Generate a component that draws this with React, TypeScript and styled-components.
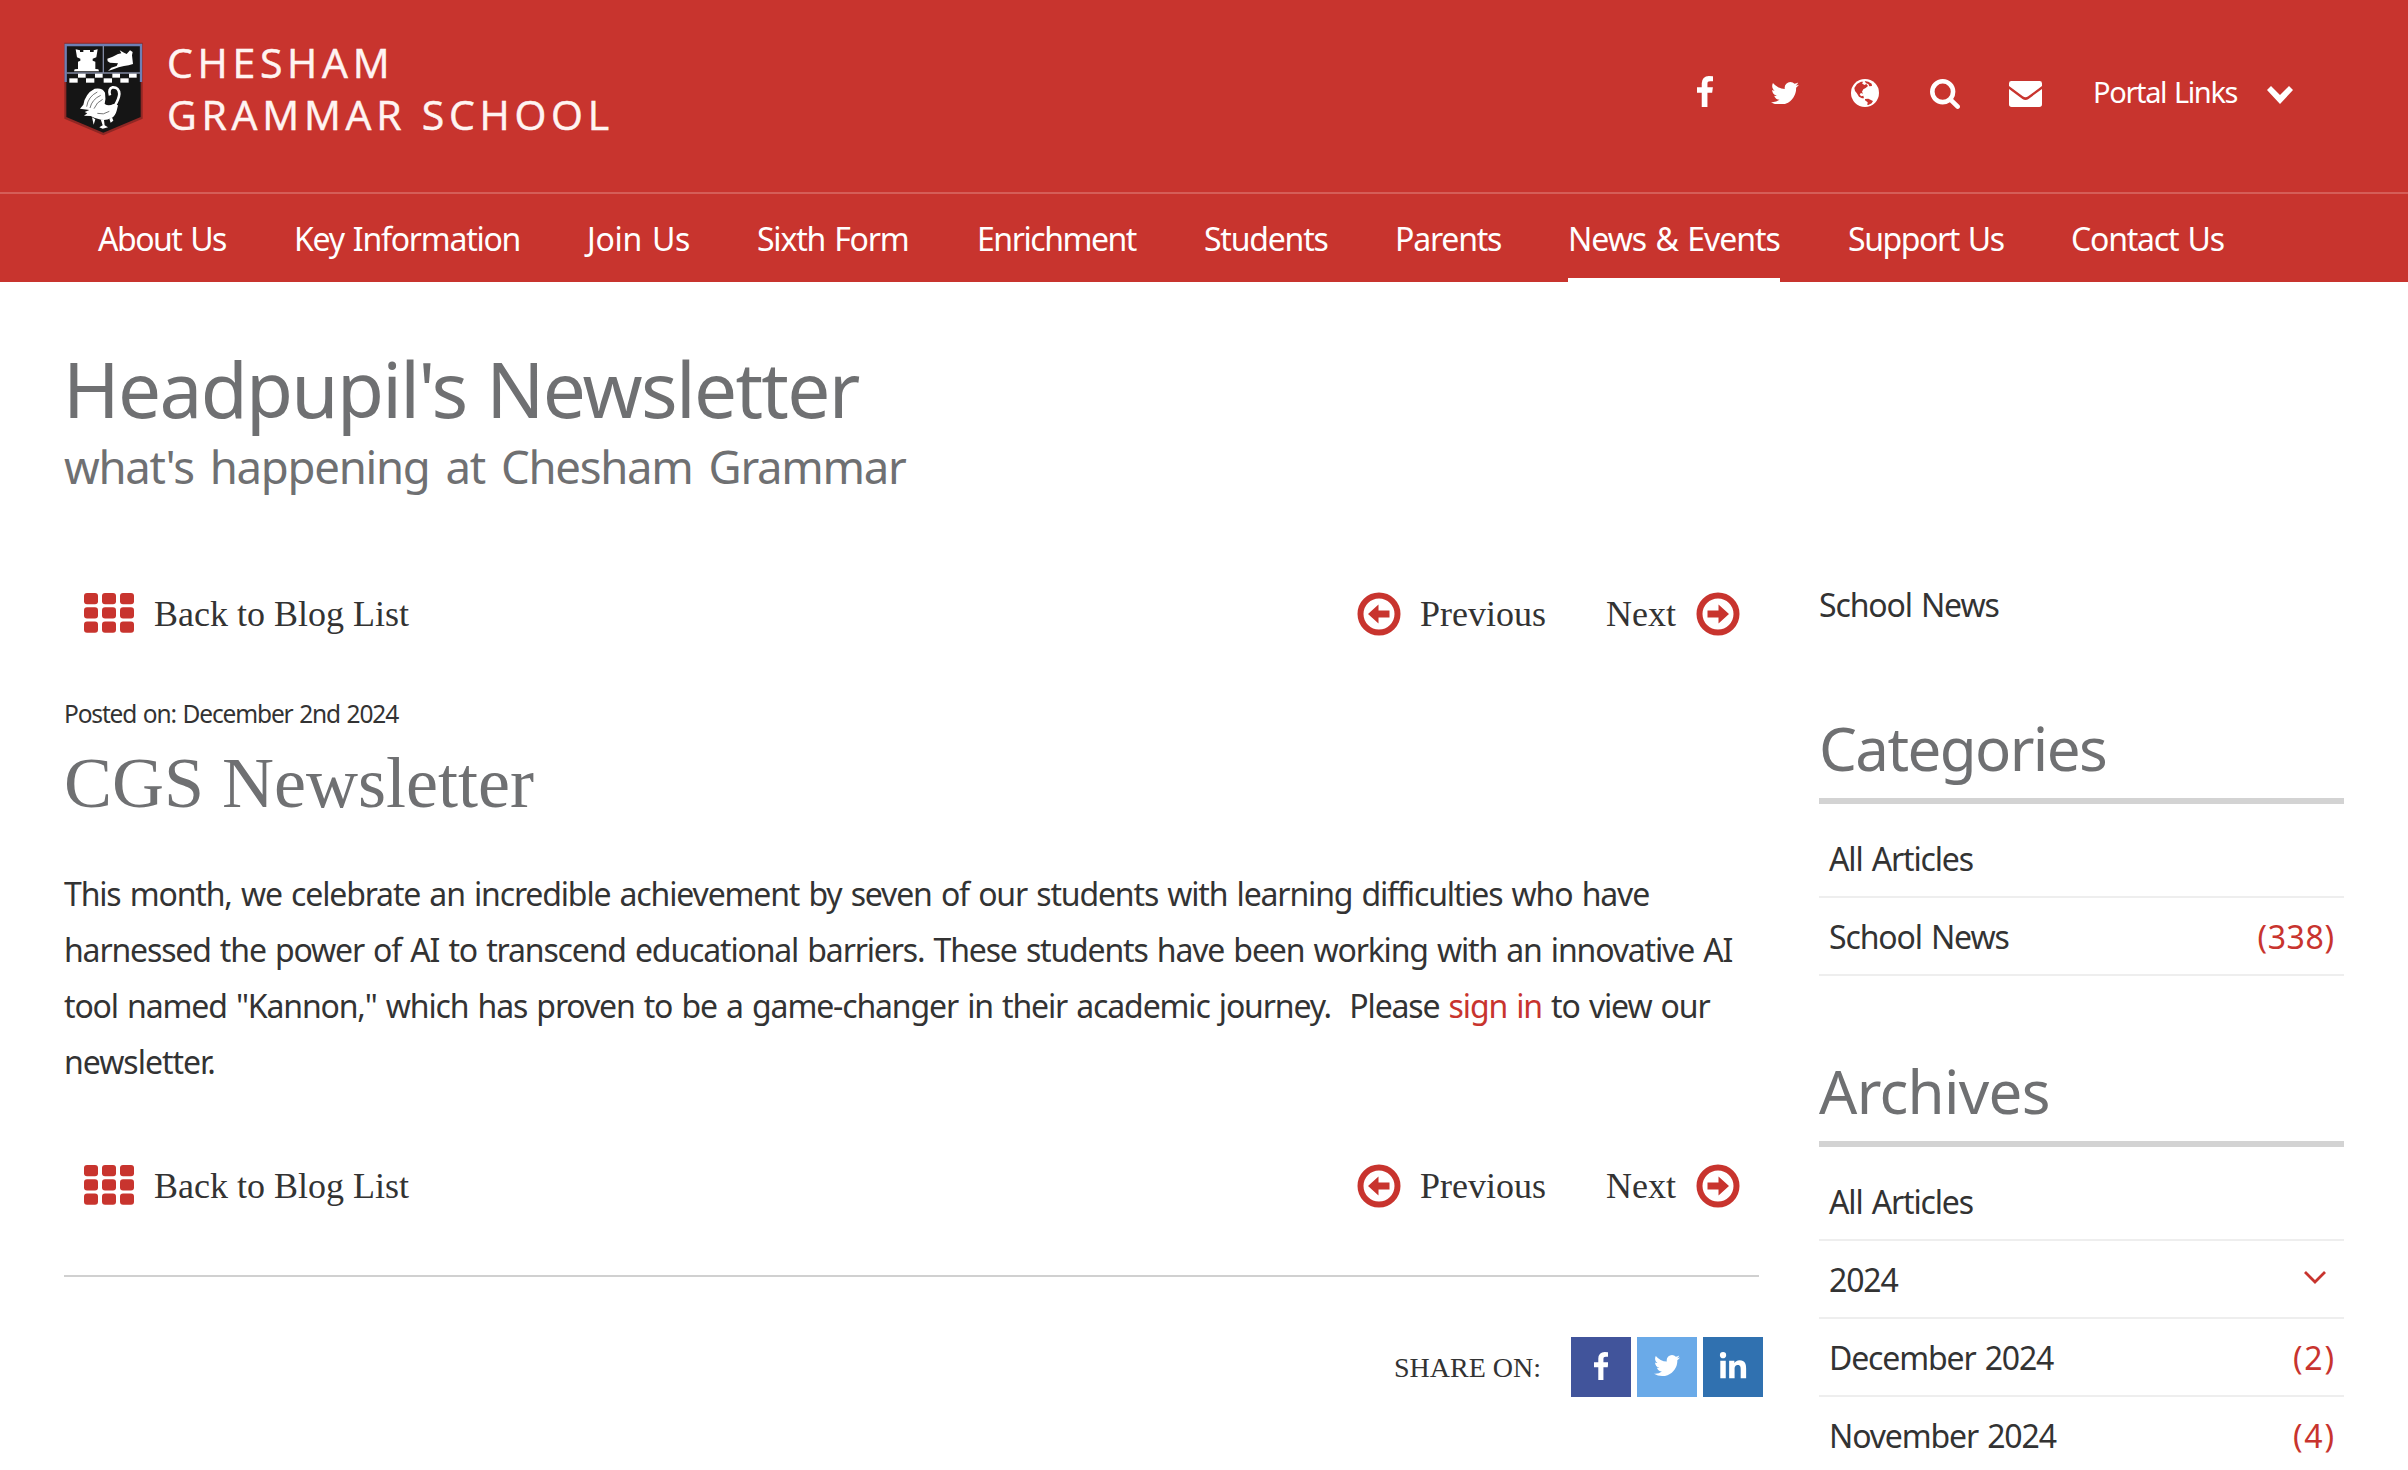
import React from "react";
import styled, { createGlobalStyle } from "styled-components";
import { FaLinkedinIn } from "react-icons/fa";

const RED = "#c8342e";
const GREY = "#6f7072";
const SANS = `"Noto Sans", "Open Sans", sans-serif`;
const SERIF = `"Liberation Serif", serif`;

const Global = createGlobalStyle`
  * { box-sizing: border-box; }
  html { overflow: hidden; }
  body { margin: 0; background: #fff; color: #333; font-family: ${SANS}; }
  h1, h2, p, ul { margin: 0; padding: 0; font-weight: 400; }
  ul { list-style: none; }
  a { color: inherit; text-decoration: none; }
  svg { display: block; flex: none; }
`;

const Page = styled.div`
  width: 2408px;
  height: 1470px;
  overflow: hidden;
`;

const Header = styled.header`
  height: 282px;
  background: ${RED};
  color: #fff;
`;

const TopBar = styled.div`
  display: flex;
  justify-content: space-between;
  align-items: flex-start;
  height: 194px;
  padding: 0 115px 0 64px;
  border-bottom: 2px solid #d55e58;
`;

const Logo = styled.a`
  display: flex;
  align-items: flex-start;
  gap: 24px;
  padding-top: 42px;
`;

const LogoText = styled.span`
  display: flex;
  flex-direction: column;
  margin-top: -6px;
  font-family: "Open Sans", sans-serif;
  color: #fff4f2;
  -webkit-text-stroke: 0.5px #fff4f2;
`;

const LogoLine = styled.span<{ $ls: number }>`
  font-size: 41px;
  line-height: 52px;
  letter-spacing: ${(p) => p.$ls}px;
  white-space: nowrap;
`;

const Tools = styled.div`
  display: flex;
  align-items: center;
  width: 628px;
  height: 186px;
`;

const Tool = styled.a<{ $drop?: number }>`
  display: flex;
  flex: none;
  align-items: center;
  justify-content: center;
  width: 80px;
  height: 40px;
  margin-top: ${(p) => (p.$drop ?? 0) * 2}px;
`;

const Portal = styled.a`
  display: flex;
  flex: 1;
  align-items: center;
  justify-content: space-between;
  margin-left: 28px;
  padding-bottom: 3px;
  font-size: 29px;
  letter-spacing: -1.35px;
  word-spacing: 1.5px;
  white-space: nowrap;
`;

const DropMark = styled.span`
  padding-top: 7px;
`;

const Nav = styled.nav`
  display: flex;
  gap: 68px;
  height: 88px;
  padding-left: 98px;
`;

const NavItem = styled.a<{ $w: number; $ls: number; $active?: boolean }>`
  width: ${(p) => p.$w}px;
  height: 88px;
  font-size: 32px;
  line-height: 90px;
  letter-spacing: ${(p) => p.$ls}px;
  word-spacing: 2px;
  white-space: nowrap;
  border-bottom: ${(p) => (p.$active ? "4px solid #fff" : "0")};
`;

const Heading = styled.div`
  height: 288px;
  padding: 61px 64px 0 63px;
  color: ${GREY};
`;

const Title = styled.h1`
  font-size: 76.5px;
  line-height: 90px;
  letter-spacing: -1.7px;
  word-spacing: 1.5px;
`;

const Subtitle = styled.p`
  padding-left: 1px;
  font-size: 45.5px;
  line-height: 66px;
  letter-spacing: -1.28px;
  word-spacing: 5.5px;
`;

const Columns = styled.div`
  display: grid;
  grid-template-columns: 1695px 525px;
  column-gap: 60px;
  padding-left: 64px;
`;

const Pager = styled.div`
  display: flex;
  align-items: center;
  height: 88px;
  padding: 0 19px 0 20px;
  font-family: ${SERIF};
  font-size: 36px;
`;

const PagerLink = styled.a<{ $gap?: number; $push?: boolean }>`
  display: flex;
  align-items: center;
  gap: ${(p) => p.$gap ?? 20}px;
  margin-left: ${(p) => (p.$push ? "auto" : "0")};
`;

const PagerNext = styled(PagerLink)`
  margin-left: 60px;
`;

const GridIcon = styled.svg`
  margin-bottom: 3px;
`;

const Posted = styled.p`
  margin-top: 36px;
  font-size: 24.5px;
  line-height: 40px;
  letter-spacing: -1.15px;
  word-spacing: 1.4px;
`;

const ArticleTitle = styled.h2`
  margin-top: 4px;
  font-family: ${SERIF};
  font-size: 72px;
  line-height: 90px;
  color: ${GREY};
`;

const Body = styled.p`
  margin: 37.5px 0 52.5px;
  font-size: 32px;
  line-height: 56px;
  word-spacing: 2px;
`;

const Line = styled.span<{ $ls: number }>`
  display: block;
  white-space: pre;
  letter-spacing: ${(p) => p.$ls}px;
`;

const SignIn = styled.a`
  color: ${RED};
`;

const Rule = styled.div`
  height: 2px;
  margin-top: 45px;
  background: #d0d0d0;
`;

const Share = styled.div`
  display: flex;
  align-items: center;
  justify-content: flex-end;
  gap: 6px;
  margin: 60px -4px 0 0;
`;

const ShareLabel = styled.span`
  margin-right: 24px;
  padding-top: 2px;
  font-family: ${SERIF};
  font-size: 28px;
`;

const ShareButton = styled.a<{ $bg: string; $lift?: number }>`
  display: flex;
  align-items: center;
  justify-content: center;
  width: 60px;
  height: 60px;
  padding-bottom: ${(p) => p.$lift ?? 2}px;
  background: ${(p) => p.$bg};
  color: #fff;
`;

const Crumb = styled.p`
  height: 128px;
  font-size: 32px;
  line-height: 70px;
  letter-spacing: -1.15px;
  word-spacing: 2px;
`;

const SideTitle = styled.h2<{ $ls: number }>`
  height: 106px;
  padding-top: 8px;
  font-size: 60px;
  line-height: 84px;
  letter-spacing: ${(p) => p.$ls}px;
  color: ${GREY};
  border-bottom: 6px solid #d3d3d3;
`;

const List = styled.ul`
  height: 237px;
  padding-top: 16px;
`;

const Item = styled.li`
  display: flex;
  align-items: center;
  justify-content: space-between;
  height: 78px;
  padding: 0 10px;
  font-size: 32px;
  letter-spacing: -1.15px;
  word-spacing: 2px;
  border-bottom: 2px solid #eee;
`;

const Count = styled.span<{ $ls: number }>`
  margin-right: ${(p) => -p.$ls}px;
  letter-spacing: ${(p) => p.$ls}px;
  color: ${RED};
`;

const Toggle = styled.span`
  margin-right: 8px;
  padding-bottom: 3px;
`;

const Crest = () => (
  <svg width="79" height="94" viewBox="42 36 237 282">
    <path d="M43 38H278V266L160 316L43 266Z" fill="#8f2724" />
    <path d="M49 44H272V261L160 308L49 261Z" fill="#151515" />
    <path d="M47 156V45H273V156" fill="none" stroke="#6d7fb4" strokeWidth="7" />
    <path d="M160 48V129M50 129H270" stroke="#8088a0" strokeWidth="4" />
    <g fill="#fff">
      {[84, 135, 187, 237].map((x) => <rect key={x} x={x} y="131" width="23" height="12" />)}
      {[58, 108, 161, 211].map((x) => <rect key={x} x={x} y="145" width="25" height="13" />)}
      <path d="M77 58L90 61V66H100V60H120V66H131V61L143 58L139 82L128 86V92L136 95V117L145 118L147 124H72L74 118L84 117V95L91 92V86L81 82Z" />
      <path d="M172 86L188 80L204 72L214 70L209 61L222 68L230 72L240 61L248 66L246 76L249 102L236 106L222 108L206 112L190 118L174 123L184 113L200 108L204 100L180 98L173 94Z" />
      <path d="M90 236L100 224Q106 190 134 176Q158 172 165 188Q168 206 164 222Q176 230 190 222L204 226L200 242Q196 258 184 264Q166 274 148 268Q130 264 122 258L102 257L112 250L104 246L118 240Z" />
      <path d="M152 268L162 270L164 286L174 292L158 296L148 292L158 286ZM178 266L186 262L190 272L182 278ZM126 262L136 268L131 284Z" />
    </g>
    <path d="M180 196Q174 176 188 172Q207 171 208 192Q207 206 194 228" fill="none" stroke="#fff" strokeWidth="8" />
    <path d="M110 230Q114 200 142 186M120 234Q126 208 152 196M132 236Q140 216 158 208M142 250Q160 256 178 244" fill="none" stroke="#777" strokeWidth="3" />
    <circle cx="205" cy="69" r="2.5" fill="#222" />
  </svg>
);

const Facebook = ({ h }: { h: number }) => (
  <svg height={h} width={h * 0.519} viewBox="95 0 864 1664" fill="#fff">
    <path d="M959 12v264h-157q-86 0-116 36t-30 108v189h293l-39 296h-254v759h-306v-759h-255v-296h255v-218q0-186 104-288.500t277-102.500q147 0 228 12z" />
  </svg>
);

const Twitter = ({ w }: { w: number }) => (
  <svg width={w} height={w * 0.812} viewBox="108 256 1576 1280" fill="#fff">
    <path d="M1684 408q-67 98-162 167 1 14 1 42 0 130-38 259.500t-115.500 248.500-184.500 210.500-258 146-323 54.500q-271 0-496-145 35 4 78 4 225 0 401-138-105-2-188-64.500t-114-159.500q33 5 61 5 43 0 85-11-112-23-185.500-111.500t-73.500-205.500v-4q68 38 146 41-66-44-105-115t-39-154q0-88 44-163 121 149 294.500 238.500t371.500 99.500q-8-38-8-74 0-134 94.500-228.500t228.500-94.500q140 0 236 102 109-21 205-78-37 115-142 178 93-10 186-50z" />
  </svg>
);

const Globe = () => (
  <svg width="28" height="28" viewBox="0 0 84 84">
    <circle cx="42" cy="42" r="42" fill="#fff" />
    <g fill={RED}>
      <path d="M10 27L18 15L30 8L37 8L33 13L40 18L46 15L51 21L44 27L37 31L33 38L36 44L30 42L26 46L30 52L37 50L39 58L33 58L24 53L17 42L12 36Z" />
      <path d="M41 6L52 8L62 14L63 21L55 22L52 15L45 13Z" />
      <path d="M42 60L52 59L66 66L62 73L52 78L49 78L50 70L42 64Z" />
    </g>
  </svg>
);

const Search = () => (
  <svg width="30" height="30" viewBox="64 128 1664 1664" fill="#fff">
    <path d="M1216 832q0-185-131.500-316.500t-316.500-131.500-316.500 131.500-131.500 316.500 131.500 316.500 316.500 131.500 316.500-131.500 131.500-316.500zm512 832q0 52-38 90t-90 38q-54 0-90-38l-343-342q-179 124-399 124-143 0-273.500-55.500t-225-150-150-225-55.500-273.500 55.500-273.500 150-225 225-150 273.500-55.500 273.500 55.500 225 150 150 225 55.500 273.500q0 220-124 399l343 343q37 37 37 90z" />
  </svg>
);

const Mail = () => (
  <svg width="33" height="26" viewBox="0 0 98 77" fill="#fff">
    <path d="M7 0H91Q98 0 98 7V15L57 45Q49 51 41 45L0 15V7Q0 0 7 0Z" />
    <path d="M0 24L40 53Q49 59 58 53L98 24V69Q98 77 90 77H8Q0 77 0 69Z" />
  </svg>
);

const PortalChevron = () => (
  <svg width="26" height="18" viewBox="0 0 26 18" fill="#fff">
    <path d="M0 4L4 0L13 9L22 0L26 4L13 18Z" />
  </svg>
);

const YearChevron = () => (
  <svg width="22" height="13" viewBox="0 0 22 13" fill="none" stroke={RED} strokeWidth="2.8">
    <path d="M1 1L11 11L21 1" />
  </svg>
);

const Grid = () => (
  <GridIcon width="50" height="40" viewBox="0 0 50 40" fill={RED}>
    {[0, 18, 36].map((x) =>
      [0, 14.3, 28.6].map((y) => <rect key={`${x}-${y}`} x={x} y={y} width="14" height="11.200" rx="3" />)
    )}
  </GridIcon>
);

const Arrow = ({ flip }: { flip?: boolean }) => (
  <svg width="44" height="44" viewBox="0 0 44 44" fill={RED}>
    <g transform={flip ? "translate(44 0) scale(-1 1)" : undefined}>
      <circle cx="22" cy="22" r="18.500" fill="none" stroke={RED} strokeWidth="6" />
      <path d="M11 22L21.500 12.500V18.500H32.500V25.500H21.500V31.500Z" />
    </g>
  </svg>
);

const nav: [string, number, number][] = [
  ["About Us", 128, -1.5],
  ["Key Information", 225, -1.25],
  ["Join Us", 102, -0.3],
  ["Sixth Form", 152, -1.2],
  ["Enrichment", 159, -1.45],
  ["Students", 123, -1.2],
  ["Parents", 105, -1.2],
  ["News & Events", 212, -1.02],
  ["Support Us", 155, -1.42],
  ["Contact Us", 153, -1.2],
];

const PagerRow = () => (
  <Pager>
    <PagerLink><Grid />Back to Blog List</PagerLink>
    <PagerLink $push $gap={19}><Arrow />Previous</PagerLink>
    <PagerNext>Next<Arrow flip /></PagerNext>
  </Pager>
);

export default function App() {
  return (
    <Page>
      <Global />
      <Header>
        <TopBar>
          <Logo>
            <Crest />
            <LogoText>
              <LogoLine $ls={4.7}>CHESHAM</LogoLine>
              <LogoLine $ls={4.75}>GRAMMAR SCHOOL</LogoLine>
            </LogoText>
          </Logo>
          <Tools>
            <Tool $drop={-1.5}><Facebook h={31} /></Tool>
            <Tool><Twitter w={28} /></Tool>
            <Tool><Globe /></Tool>
            <Tool $drop={1}><Search /></Tool>
            <Tool $drop={1}><Mail /></Tool>
            <Portal>
              Portal Links
              <DropMark><PortalChevron /></DropMark>
            </Portal>
          </Tools>
        </TopBar>
        <Nav>
          {nav.map(([label, w, ls]) => (
            <NavItem key={label} $w={w} $ls={ls} $active={label === "News & Events"}>{label}</NavItem>
          ))}
        </Nav>
      </Header>
      <Heading>
        <Title>Headpupil's Newsletter</Title>
        <Subtitle>what's happening at Chesham Grammar</Subtitle>
      </Heading>
      <Columns>
        <main>
          <PagerRow />
          <Posted>Posted on: December 2nd 2024</Posted>
          <ArticleTitle>CGS Newsletter</ArticleTitle>
          <Body>
            <Line $ls={-1.15}>This month, we celebrate an incredible achievement by seven of our students with learning difficulties who have</Line>
            <Line $ls={-1.16}>harnessed the power of AI to transcend educational barriers. These students have been working with an innovative AI</Line>
            <Line $ls={-1.15}>tool named "Kannon," which has proven to be a game-changer in their academic journey.&nbsp; Please <SignIn>sign in</SignIn> to view our</Line>
            <Line $ls={-1}>newsletter.</Line>
          </Body>
          <PagerRow />
          <Rule />
          <Share>
            <ShareLabel>SHARE ON:</ShareLabel>
            <ShareButton $bg="#41549b"><Facebook h={28} /></ShareButton>
            <ShareButton $bg="#6aaae8"><Twitter w={26} /></ShareButton>
            <ShareButton $bg="#3071b0" $lift={0}><FaLinkedinIn size={30} /></ShareButton>
          </Share>
        </main>
        <aside>
          <Crumb>School News</Crumb>
          <SideTitle $ls={-1.6}>Categories</SideTitle>
          <List>
            <Item>All Articles</Item>
            <Item>School News<Count $ls={0.6}>(338)</Count></Item>
          </List>
          <SideTitle $ls={-0.7}>Archives</SideTitle>
          <List>
            <Item>All Articles</Item>
            <Item>2024<Toggle><YearChevron /></Toggle></Item>
            <Item>December 2024<Count $ls={1.8}>(2)</Count></Item>
            <Item>November 2024<Count $ls={1.8}>(4)</Count></Item>
          </List>
        </aside>
      </Columns>
    </Page>
  );
}
